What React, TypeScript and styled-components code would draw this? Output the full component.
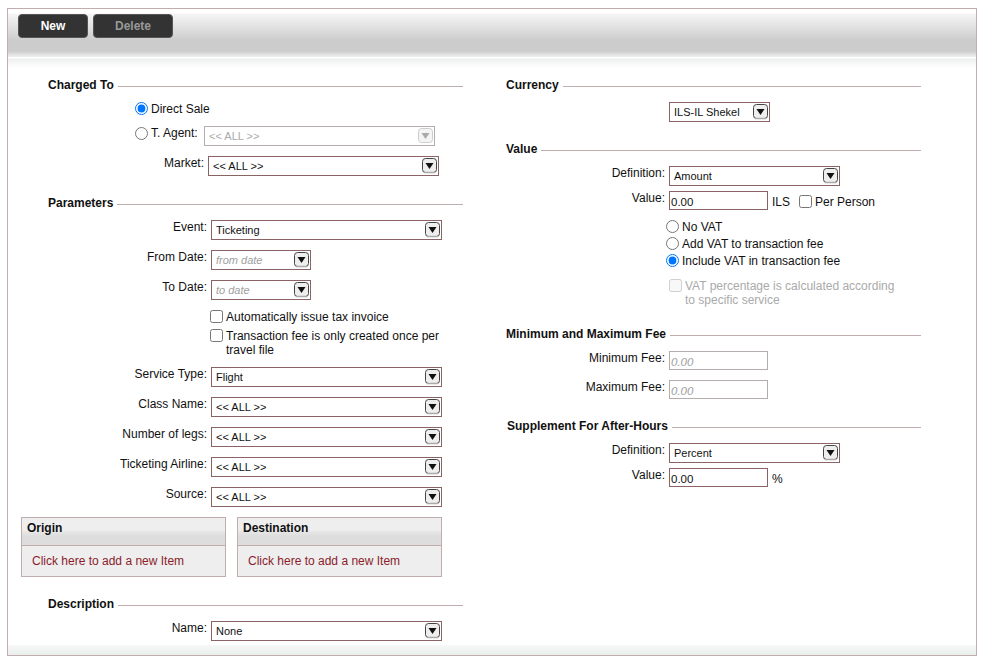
import React from 'react'
import styled, { createGlobalStyle } from 'styled-components'

const GlobalStyle = createGlobalStyle`
  html, body {
    margin: 0;
    padding: 0;
    background: #ffffff;
  }
  body {
    font-family: "Liberation Sans", Arial, sans-serif;
    font-size: 12px;
    color: #111111;
  }
`

const Frame = styled.div`
  box-sizing: border-box;
  width: 970px;
  height: 648px;
  margin: 8px 0 0 7px;
  border: 1px solid #c0aeae;
  display: flex;
  flex-direction: column;
`

const Toolbar = styled.div`
  flex: none;
  box-sizing: border-box;
  height: 59px;
  padding: 5px 0 0 10px;
  display: flex;
  align-items: flex-start;
  gap: 5px;
  background: linear-gradient(
    to bottom,
    #ffffff 0,
    #ffffff 4px,
    #f5f5f5 5px,
    #cccccc 32px,
    #cccccc 42px,
    #f0f0f0 48px,
    #ffffff 48px,
    #ffffff 49px,
    #eef0ef 50px,
    #ffffff 59px
  );
`

const ToolButton = styled.div<{ $width: number; $disabled?: boolean }>`
  box-sizing: border-box;
  width: ${({ $width }) => $width}px;
  height: 24px;
  line-height: 22px;
  text-align: center;
  background: #333333;
  border: 1px solid #555555;
  border-radius: 4px;
  font-weight: bold;
  font-size: 12px;
  color: ${({ $disabled }) => ($disabled ? '#999999' : '#ffffff')};
`

const Columns = styled.div`
  flex: 1;
  display: flex;
  align-items: flex-start;
`

const LeftColumn = styled.div`
  box-sizing: border-box;
  width: 482px;
  padding: 9px 27px 0 13px;
`

const RightColumn = styled.div`
  box-sizing: border-box;
  width: 431px;
  padding-top: 9px;
`

const SectionHeader = styled.div<{ $indent: number; $top: number }>`
  display: flex;
  align-items: center;
  height: 16px;
  margin: ${({ $top }) => $top}px 0 0 ${({ $indent }) => $indent}px;
  font-weight: bold;
  font-size: 12px;
  white-space: nowrap;

  &::after {
    content: '';
    flex: 1;
    height: 1px;
    margin: 2px 0 0 4px;
    background: #c0aeae;
  }
`

const Row = styled.div<{ $top: number; $label: number }>`
  display: grid;
  grid-template-columns: ${({ $label }) => $label}px auto;
  column-gap: 4px;
  justify-content: start;
  margin-top: ${({ $top }) => $top}px;
`

const Label = styled.div`
  text-align: right;
  line-height: 14px;
  white-space: nowrap;
`

const SelectBox = styled.div<{ $width: number; $disabled?: boolean }>`
  box-sizing: border-box;
  width: ${({ $width }) => $width}px;
  height: 20px;
  display: flex;
  align-items: center;
  justify-content: space-between;
  padding: 0 1px 0 4px;
  border: 1px solid ${({ $disabled }) => ($disabled ? '#b3adad' : '#8a6464')};
  background: #ffffff;
  font-size: 11px;
  color: ${({ $disabled }) => ($disabled ? '#aaaaaa' : '#111111')};
`

const ItalicValue = styled.span`
  font-style: italic;
  color: #a0a0a0;
`

const ArrowFrame = styled.svg`
  flex: none;
  display: block;
`

const Arrow = ({ disabled }: { disabled?: boolean }) => (
  <ArrowFrame width="15" height="16" viewBox="0 0 15 16">
    <rect
      x="0.5"
      y="0.5"
      width="14"
      height="14"
      rx="3"
      fill={disabled ? '#f4f4f4' : '#eeeeee'}
      stroke={disabled ? '#cccccc' : '#444444'}
    />
    {!disabled && <path d="M2 14.5h11" stroke="#aaaaaa" strokeWidth="1.5" />}
    <path d="M3.5 5h8l-4 6z" fill={disabled ? '#aaaaaa' : '#111111'} />
  </ArrowFrame>
)

const Select = ({
  width,
  value,
  disabled,
  italic,
}: {
  width: number
  value: string
  disabled?: boolean
  italic?: boolean
}) => (
  <SelectBox $width={width} $disabled={disabled}>
    {italic ? <ItalicValue>{value}</ItalicValue> : <span>{value}</span>}
    <Arrow disabled={disabled} />
  </SelectBox>
)

const ValueBox = styled.div<{ $disabled?: boolean }>`
  box-sizing: border-box;
  width: 99px;
  height: 19px;
  padding: 3px 0 0 1px;
  line-height: 14px;
  border: 1px solid ${({ $disabled }) => ($disabled ? '#b3adad' : '#8a6464')};
  font-size: 11.5px;
  font-style: ${({ $disabled }) => ($disabled ? 'italic' : 'normal')};
  color: ${({ $disabled }) => ($disabled ? '#a0a0a0' : '#111111')};
`

const Inline = styled.div`
  display: flex;
  align-items: center;
`

const Unit = styled.span`
  margin: 2px 0 0 4px;
`

const OptionRow = styled.label<{ $top: number; $left: number; $muted?: boolean }>`
  display: flex;
  align-items: flex-start;
  margin: ${({ $top }) => $top}px 0 0 ${({ $left }) => $left}px;
  line-height: 14px;
  color: ${({ $muted }) => ($muted ? '#aaaaaa' : '#111111')};
`

const InlineOption = styled.label`
  display: flex;
  align-items: center;
  margin: 2px 0 0 9px;
`

const Radio = styled.input.attrs({ type: 'radio' })`
  flex: none;
  width: 13px;
  height: 13px;
  margin: 0 3px 0 0;
`

const Check = styled.input.attrs({ type: 'checkbox' })`
  flex: none;
  width: 13px;
  height: 13px;
  margin: 0 3px 0 0;
`

const AgentRow = styled.div`
  display: flex;
  align-items: flex-start;
  margin: 10px 0 0 114px;
`

const AgentLabel = styled.label`
  display: flex;
  align-items: center;
  width: 69px;
  line-height: 14px;
`

const ListBoxes = styled.div`
  display: flex;
  gap: 11px;
  margin-top: 10px;
`

const ListBox = styled.div`
  box-sizing: border-box;
  width: 205px;
  height: 60px;
  border: 1px solid #c0aeae;
  background: #eeeeee;
`

const ListTitle = styled.div`
  box-sizing: border-box;
  height: 28px;
  padding: 3px 0 0 5px;
  line-height: 14px;
  font-weight: bold;
  border-bottom: 1px solid #c0aeae;
  background: linear-gradient(to bottom, #eeeeee 0, #eeeeee 12px, #e8e8e8 13px, #dddddd 18px, #dddddd 28px);
`

const ListAction = styled.div`
  padding: 8px 0 0 10px;
  line-height: 14px;
  color: #8a1c2c;
`

const BottomStrip = styled.div`
  flex: none;
  height: 10px;
  background: linear-gradient(to bottom, #f6f8f7, #e9eeec);
`

const App: React.FC = () => (
  <>
    <GlobalStyle />
    <Frame>
      <Toolbar>
        <ToolButton $width={70}>New</ToolButton>
        <ToolButton $width={80} $disabled>
          Delete
        </ToolButton>
      </Toolbar>
      <Columns>
        <LeftColumn>
          <SectionHeader $indent={27} $top={0}>
            Charged To
          </SectionHeader>
          <OptionRow $top={9} $left={114}>
            <Radio name="charged" defaultChecked />
            Direct Sale
          </OptionRow>
          <AgentRow>
            <AgentLabel>
              <Radio name="charged" />
              T. Agent:
            </AgentLabel>
            <Select width={231} value="<< ALL >>" disabled />
          </AgentRow>
          <Row $top={10} $label={183}>
            <Label>Market:</Label>
            <Select width={231} value="<< ALL >>" />
          </Row>

          <SectionHeader $indent={27} $top={19}>
            Parameters
          </SectionHeader>
          <Row $top={9} $label={186}>
            <Label>Event:</Label>
            <Select width={231} value="Ticketing" />
          </Row>
          <Row $top={10} $label={186}>
            <Label>From Date:</Label>
            <Select width={100} value="from date" italic />
          </Row>
          <Row $top={10} $label={186}>
            <Label>To Date:</Label>
            <Select width={100} value="to date" italic />
          </Row>
          <OptionRow $top={10} $left={189}>
            <Check />
            Automatically issue tax invoice
          </OptionRow>
          <OptionRow $top={5} $left={189}>
            <Check />
            <span>
              Transaction fee is only created once per
              <br />
              travel file
            </span>
          </OptionRow>
          <Row $top={10} $label={186}>
            <Label>Service Type:</Label>
            <Select width={231} value="Flight" />
          </Row>
          <Row $top={10} $label={186}>
            <Label>Class Name:</Label>
            <Select width={231} value="<< ALL >>" />
          </Row>
          <Row $top={10} $label={186}>
            <Label>Number of legs:</Label>
            <Select width={231} value="<< ALL >>" />
          </Row>
          <Row $top={10} $label={186}>
            <Label>Ticketing Airline:</Label>
            <Select width={231} value="<< ALL >>" />
          </Row>
          <Row $top={10} $label={186}>
            <Label>Source:</Label>
            <Select width={231} value="<< ALL >>" />
          </Row>
          <ListBoxes>
            <ListBox>
              <ListTitle>Origin</ListTitle>
              <ListAction>Click here to add a new Item</ListAction>
            </ListBox>
            <ListBox>
              <ListTitle>Destination</ListTitle>
              <ListAction>Click here to add a new Item</ListAction>
            </ListBox>
          </ListBoxes>
          <SectionHeader $indent={27} $top={19}>
            Description
          </SectionHeader>
          <Row $top={9} $label={186}>
            <Label>Name:</Label>
            <Select width={231} value="None" />
          </Row>
        </LeftColumn>

        <RightColumn>
          <SectionHeader $indent={16} $top={0}>
            Currency
          </SectionHeader>
          <Row $top={9} $label={175}>
            <span />
            <Select width={101} value="ILS-IL Shekel" />
          </Row>
          <SectionHeader $indent={16} $top={19}>
            Value
          </SectionHeader>
          <Row $top={9} $label={175}>
            <Label>Definition:</Label>
            <Select width={171} value="Amount" />
          </Row>
          <Row $top={5} $label={175}>
            <Label>Value:</Label>
            <Inline>
              <ValueBox>0.00</ValueBox>
              <Unit>ILS</Unit>
              <InlineOption>
                <Check />
                Per Person
              </InlineOption>
            </Inline>
          </Row>
          <OptionRow $top={10} $left={176}>
            <Radio name="vat" />
            No VAT
          </OptionRow>
          <OptionRow $top={3} $left={176}>
            <Radio name="vat" />
            Add VAT to transaction fee
          </OptionRow>
          <OptionRow $top={3} $left={176}>
            <Radio name="vat" defaultChecked />
            Include VAT in transaction fee
          </OptionRow>
          <OptionRow $top={11} $left={179} $muted>
            <Check disabled />
            <span>
              VAT percentage is calculated according
              <br />
              to specific service
            </span>
          </OptionRow>
          <SectionHeader $indent={16} $top={19}>
            Minimum and Maximum Fee
          </SectionHeader>
          <Row $top={9} $label={175}>
            <Label>Minimum Fee:</Label>
            <ValueBox $disabled>0.00</ValueBox>
          </Row>
          <Row $top={10} $label={175}>
            <Label>Maximum Fee:</Label>
            <ValueBox $disabled>0.00</ValueBox>
          </Row>
          <SectionHeader $indent={17} $top={19}>
            Supplement For After-Hours
          </SectionHeader>
          <Row $top={9} $label={175}>
            <Label>Definition:</Label>
            <Select width={171} value="Percent" />
          </Row>
          <Row $top={5} $label={175}>
            <Label>Value:</Label>
            <Inline>
              <ValueBox>0.00</ValueBox>
              <Unit>%</Unit>
            </Inline>
          </Row>
        </RightColumn>
      </Columns>
      <BottomStrip />
    </Frame>
  </>
)

export default App
